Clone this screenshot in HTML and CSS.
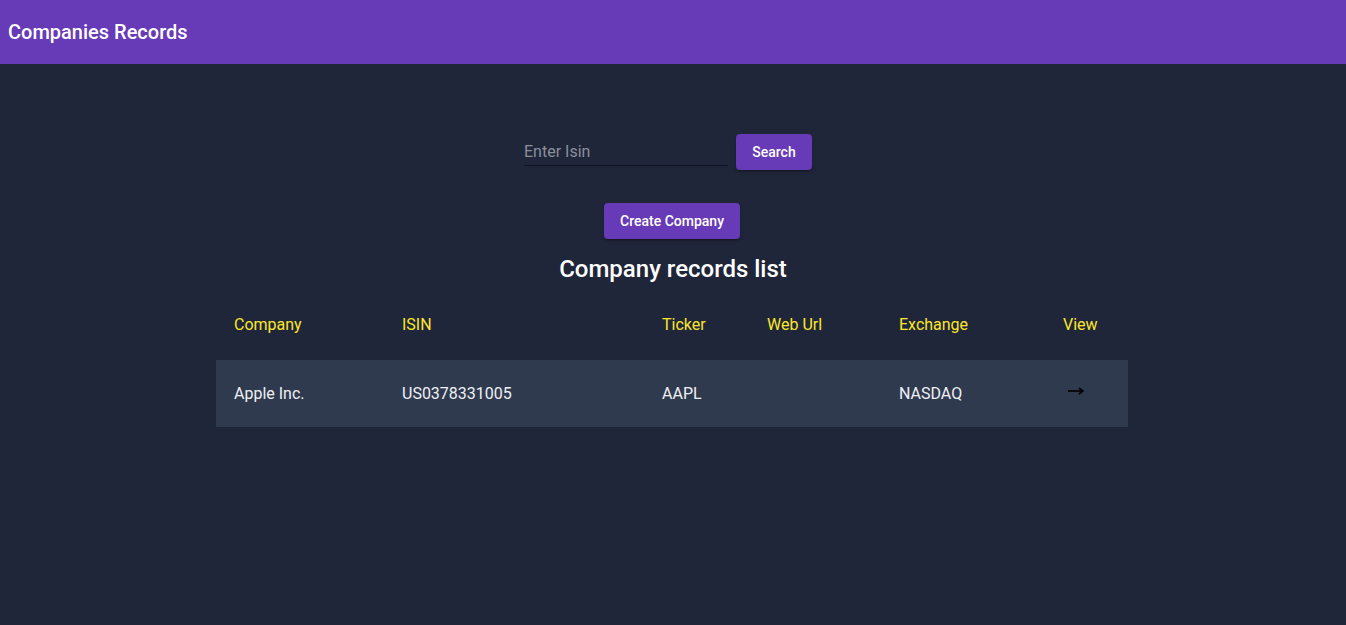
FILE: index.html
```html
<!DOCTYPE html>
<html>
<head>
<meta charset="utf-8">
<link rel="stylesheet" href="styles.css">
</head>
<body>
<header class="appbar"><h1 class="appbar-title">Companies Records</h1></header>
<main class="content">
  <div class="search-row">
    <div class="field"><input class="field-input" type="text" placeholder="Enter Isin"></div>
    <button class="btn btn-search">Search</button>
  </div>
  <button class="btn btn-create">Create Company</button>
  <h2 class="list-title">Company records list</h2>
  <table class="records">
    <colgroup>
      <col class="c1"><col class="c2"><col class="c3"><col class="c4"><col class="c5"><col class="c6">
    </colgroup>
    <thead>
      <tr><th>Company</th><th>ISIN</th><th>Ticker</th><th>Web Url</th><th>Exchange</th><th>View</th></tr>
    </thead>
    <tbody>
      <tr>
        <td>Apple Inc.</td><td>US0378331005</td><td>AAPL</td><td></td><td>NASDAQ</td>
        <td><a class="view-link" href="#"><svg width="18" height="10" viewBox="0 0 18 10"><path d="M1 5h15" stroke="#000" stroke-width="1.6"/><path d="M12 2l4 3-4 3" fill="none" stroke="#000" stroke-width="1.6"/></svg></a></td>
      </tr>
    </tbody>
  </table>
</main>
</body>
</html>
```
FILE: styles.css
```css
* { box-sizing: border-box; }
html, body { margin: 0; padding: 0; }
body {
  background: #202639;
  font-family: Roboto, "Liberation Sans", sans-serif;
  color: #eceef3;
  min-height: 625px;
}
.appbar {
  height: 64px;
  background: #673ab7;
  display: flex;
  align-items: center;
  padding: 0 8px;
}
.appbar-title {
  margin: 0;
  font-size: 20px;
  font-weight: 500;
  color: #fff;
}
.content {
  display: flex;
  flex-direction: column;
  align-items: center;
  padding-top: 70px;
}
.search-row {
  display: flex;
  align-items: flex-start;
  gap: 8px;
  padding-right: 10px;
}
.field {
  width: 204px;
  height: 32px;
  border-bottom: 1px solid #111420;
}
.field-input {
  width: 100%;
  height: 31px;
  border: none;
  background: transparent;
  font-family: inherit;
  font-size: 16px;
  color: #eee;
  padding: 4px 0 0 0;
  outline: none;
}
.field-input::placeholder { color: #8b8f9a; }
.btn {
  height: 36px;
  border: none;
  border-radius: 4px;
  background: #673ab7;
  color: #fff;
  font-family: inherit;
  font-size: 14px;
  font-weight: 500;
  padding: 0 16px;
  box-shadow: 0 3px 1px -2px rgba(0,0,0,.2), 0 2px 2px 0 rgba(0,0,0,.14), 0 1px 5px 0 rgba(0,0,0,.12);
}
.btn-search { width: 76px; }
.btn-create { width: 136px; margin-top: 33px; margin-right: 2px; }
.list-title {
  margin: 16px 0 0 0;
  font-size: 24px;
  font-weight: 500;
  line-height: 28px;
  color: #fff;
}
.records {
  margin-top: 8px;
  margin-right: 2px;
  width: 912px;
  border-collapse: collapse;
  table-layout: fixed;
}
.c1 { width: 168px; }
.c2 { width: 260px; }
.c3 { width: 105px; }
.c4 { width: 132px; }
.c5 { width: 164px; }
.c6 { width: 83px; }
.records th {
  text-align: left;
  font-weight: 400;
  font-size: 16px;
  color: #fbe62a;
  height: 69px;
  padding: 0 18px 2px 18px;
}
.records td {
  font-size: 16px;
  height: 67px;
  padding: 0 18px;
  color: #eef0f5;
}
.records tbody tr { background: #303a4f; }
.view-link { display: inline-block; margin-left: 4px; position: relative; top: -3px; }
.view-link svg { display: block; }
```
